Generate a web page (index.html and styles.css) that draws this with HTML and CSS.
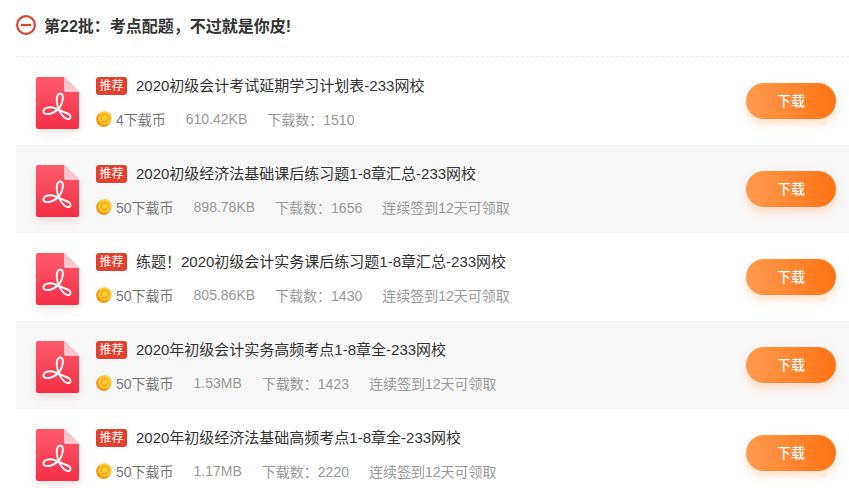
FILE: index.html
```html
<!DOCTYPE html>
<html lang="zh-CN">
    <head>
        <meta charset="UTF-8">
        <title>第22批</title>
        <link rel="stylesheet" href="styles.css">
    </head>
    <body>
        <svg class="defs" width="0" height="0">
            <defs>
                <linearGradient id="pdfGrad" x1="0" y1="0" x2="0" y2="1">
                    <stop offset="0" stop-color="#ff5a6c"/>
                    <stop offset="1" stop-color="#f42f45"/>
                </linearGradient>
                <radialGradient id="coinGrad" cx="0.55" cy="0.45" r="0.6">
                    <stop offset="0" stop-color="#ffdc45"/>
                    <stop offset="1" stop-color="#fbb91e"/>
                </radialGradient>
                <symbol id="pdf" viewBox="0 0 43 52">
                    <path d="M2 0H28L43 15V50a2 2 0 0 1-2 2H2a2 2 0 0 1-2-2V2a2 2 0 0 1 2-2z" fill="url(#pdfGrad)"/>
                    <path d="M28 0L43 15H30a2 2 0 0 1-2-2z" fill="#ffc4cc"/>
                    <path d="M24.5 16.5C27.5 17 27.5 22 25.5 27C23.5 31.500 19.500 35 15 36.500C11 37.800 7.500 37 7.500 34.500C7.500 31 12 29.800 16.500 30.500C21 31.200 25 34.200 29 35.500C32 36.300 34.500 37.500 34.500 40C34.500 42.500 31 42.500 28.500 40.500C24.500 37 21.500 30.500 20.800 25C20.300 20.500 21.500 16 24.500 16.500z" fill="none" stroke="#fff" stroke-width="1.9" stroke-linejoin="round"/>
                </symbol>
                <symbol id="coin" viewBox="0 0 16 16">
                    <circle cx="7.500" cy="8.500" r="7.500" fill="#f39a14"/>
                    <circle cx="8.800" cy="7" r="6.800" fill="url(#coinGrad)"/>
                    <circle cx="8.800" cy="7" r="3.600" fill="#fccb33" stroke="#eea511" stroke-width="1.200"/>
                </symbol>
            </defs>
        </svg>

        <div class="batch">
            <h2 class="batch-title">
                <svg class="toggle" viewBox="0 0 20 20" width="20" height="20">
                    <circle cx="10" cy="10" r="8.900" fill="none" stroke="#e2412e" stroke-width="2.200"/>
                    <rect x="5" y="8.900" width="10" height="2.200" fill="#e2412e"/>
                </svg>
                第22批：考点配题，不过就是你皮!
            </h2>

            <ul class="file-list">
                <li class="file-item">
                    <svg class="file-icon"><use href="#pdf"/></svg>
                    <div class="file-info">
                        <div class="file-name"><span class="tag">推荐</span>2020初级会计考试延期学习计划表-233网校</div>
                        <div class="file-meta">
                            <span class="price"><svg class="coin"><use href="#coin"/></svg>4下载币</span>
                            <span>610.42KB</span>
                            <span>下载数：1510</span>
                        </div>
                    </div>
                    <button class="btn">下载</button>
                </li>
                <li class="file-item">
                    <svg class="file-icon"><use href="#pdf"/></svg>
                    <div class="file-info">
                        <div class="file-name"><span class="tag">推荐</span>2020初级经济法基础课后练习题1-8章汇总-233网校</div>
                        <div class="file-meta">
                            <span class="price"><svg class="coin"><use href="#coin"/></svg>50下载币</span>
                            <span>898.78KB</span>
                            <span>下载数：1656</span>
                            <span>连续签到12天可领取</span>
                        </div>
                    </div>
                    <button class="btn">下载</button>
                </li>
                <li class="file-item">
                    <svg class="file-icon"><use href="#pdf"/></svg>
                    <div class="file-info">
                        <div class="file-name"><span class="tag">推荐</span>练题！2020初级会计实务课后练习题1-8章汇总-233网校</div>
                        <div class="file-meta">
                            <span class="price"><svg class="coin"><use href="#coin"/></svg>50下载币</span>
                            <span>805.86KB</span>
                            <span>下载数：1430</span>
                            <span>连续签到12天可领取</span>
                        </div>
                    </div>
                    <button class="btn">下载</button>
                </li>
                <li class="file-item">
                    <svg class="file-icon"><use href="#pdf"/></svg>
                    <div class="file-info">
                        <div class="file-name"><span class="tag">推荐</span>2020年初级会计实务高频考点1-8章全-233网校</div>
                        <div class="file-meta">
                            <span class="price"><svg class="coin"><use href="#coin"/></svg>50下载币</span>
                            <span>1.53MB</span>
                            <span>下载数：1423</span>
                            <span>连续签到12天可领取</span>
                        </div>
                    </div>
                    <button class="btn">下载</button>
                </li>
                <li class="file-item">
                    <svg class="file-icon"><use href="#pdf"/></svg>
                    <div class="file-info">
                        <div class="file-name"><span class="tag">推荐</span>2020年初级经济法基础高频考点1-8章全-233网校</div>
                        <div class="file-meta">
                            <span class="price"><svg class="coin"><use href="#coin"/></svg>50下载币</span>
                            <span>1.17MB</span>
                            <span>下载数：2220</span>
                            <span>连续签到12天可领取</span>
                        </div>
                    </div>
                    <button class="btn">下载</button>
                </li>
            </ul>
        </div>
    </body>
</html>
```

FILE: styles.css
```css
* {
    margin: 0;
    padding: 0;
    box-sizing: border-box;
}

html, body {
    height: 488px;
    overflow: hidden;
}

body {
    background: #fff;
    color: #333;
    font-family: "Liberation Sans", "Noto Sans CJK SC", sans-serif;
}

.defs {
    position: absolute;
}

.batch {
    padding-left: 16px;
}

.batch-title {
    display: flex;
    align-items: center;
    gap: 8px;
    height: 57px;
    padding-bottom: 6px;
    font-size: 16px;
    font-weight: bold;
    color: #333;
    border-bottom: 1px dashed #eee;
}

.toggle {
    flex: none;
}

.file-list {
    list-style: none;
}

.file-item {
    display: flex;
    align-items: flex-start;
    height: 88px;
    padding: 20px 13px 0 20px;
}

.file-item:nth-child(even) {
    background: #f8f8f8;
}

.file-icon {
    flex: none;
    width: 43px;
    height: 52px;
    filter: drop-shadow(0 4px 4px rgba(244, 47, 69, 0.15));
}

.file-info {
    flex: 1;
    margin-left: 17px;
}

.file-name {
    display: flex;
    align-items: center;
    height: 18px;
    font-size: 15px;
    line-height: 18px;
    color: #333;
}

.tag {
    flex: none;
    width: 31px;
    height: 18px;
    margin-right: 9px;
    background: #e2412e;
    border-radius: 3px;
    color: #fff;
    font-size: 12px;
    line-height: 18px;
    text-align: center;
}

.file-meta {
    display: flex;
    align-items: center;
    gap: 20px;
    height: 18px;
    margin-top: 15px;
    font-size: 14px;
    color: #999;
}

.price {
    display: flex;
    align-items: center;
    gap: 4px;
    color: #777;
}

.coin {
    flex: none;
    width: 16px;
    height: 16px;
}

.btn {
    flex: none;
    width: 90px;
    height: 36px;
    margin-top: 6px;
    padding-bottom: 2px;
    border: none;
    border-radius: 18px;
    background: linear-gradient(90deg, #ff9a4f, #ff7413);
    box-shadow: 0 5px 10px rgba(255, 128, 40, 0.25);
    color: #fff;
    font-family: inherit;
    font-size: 14px;
    font-weight: 500;
}
```
